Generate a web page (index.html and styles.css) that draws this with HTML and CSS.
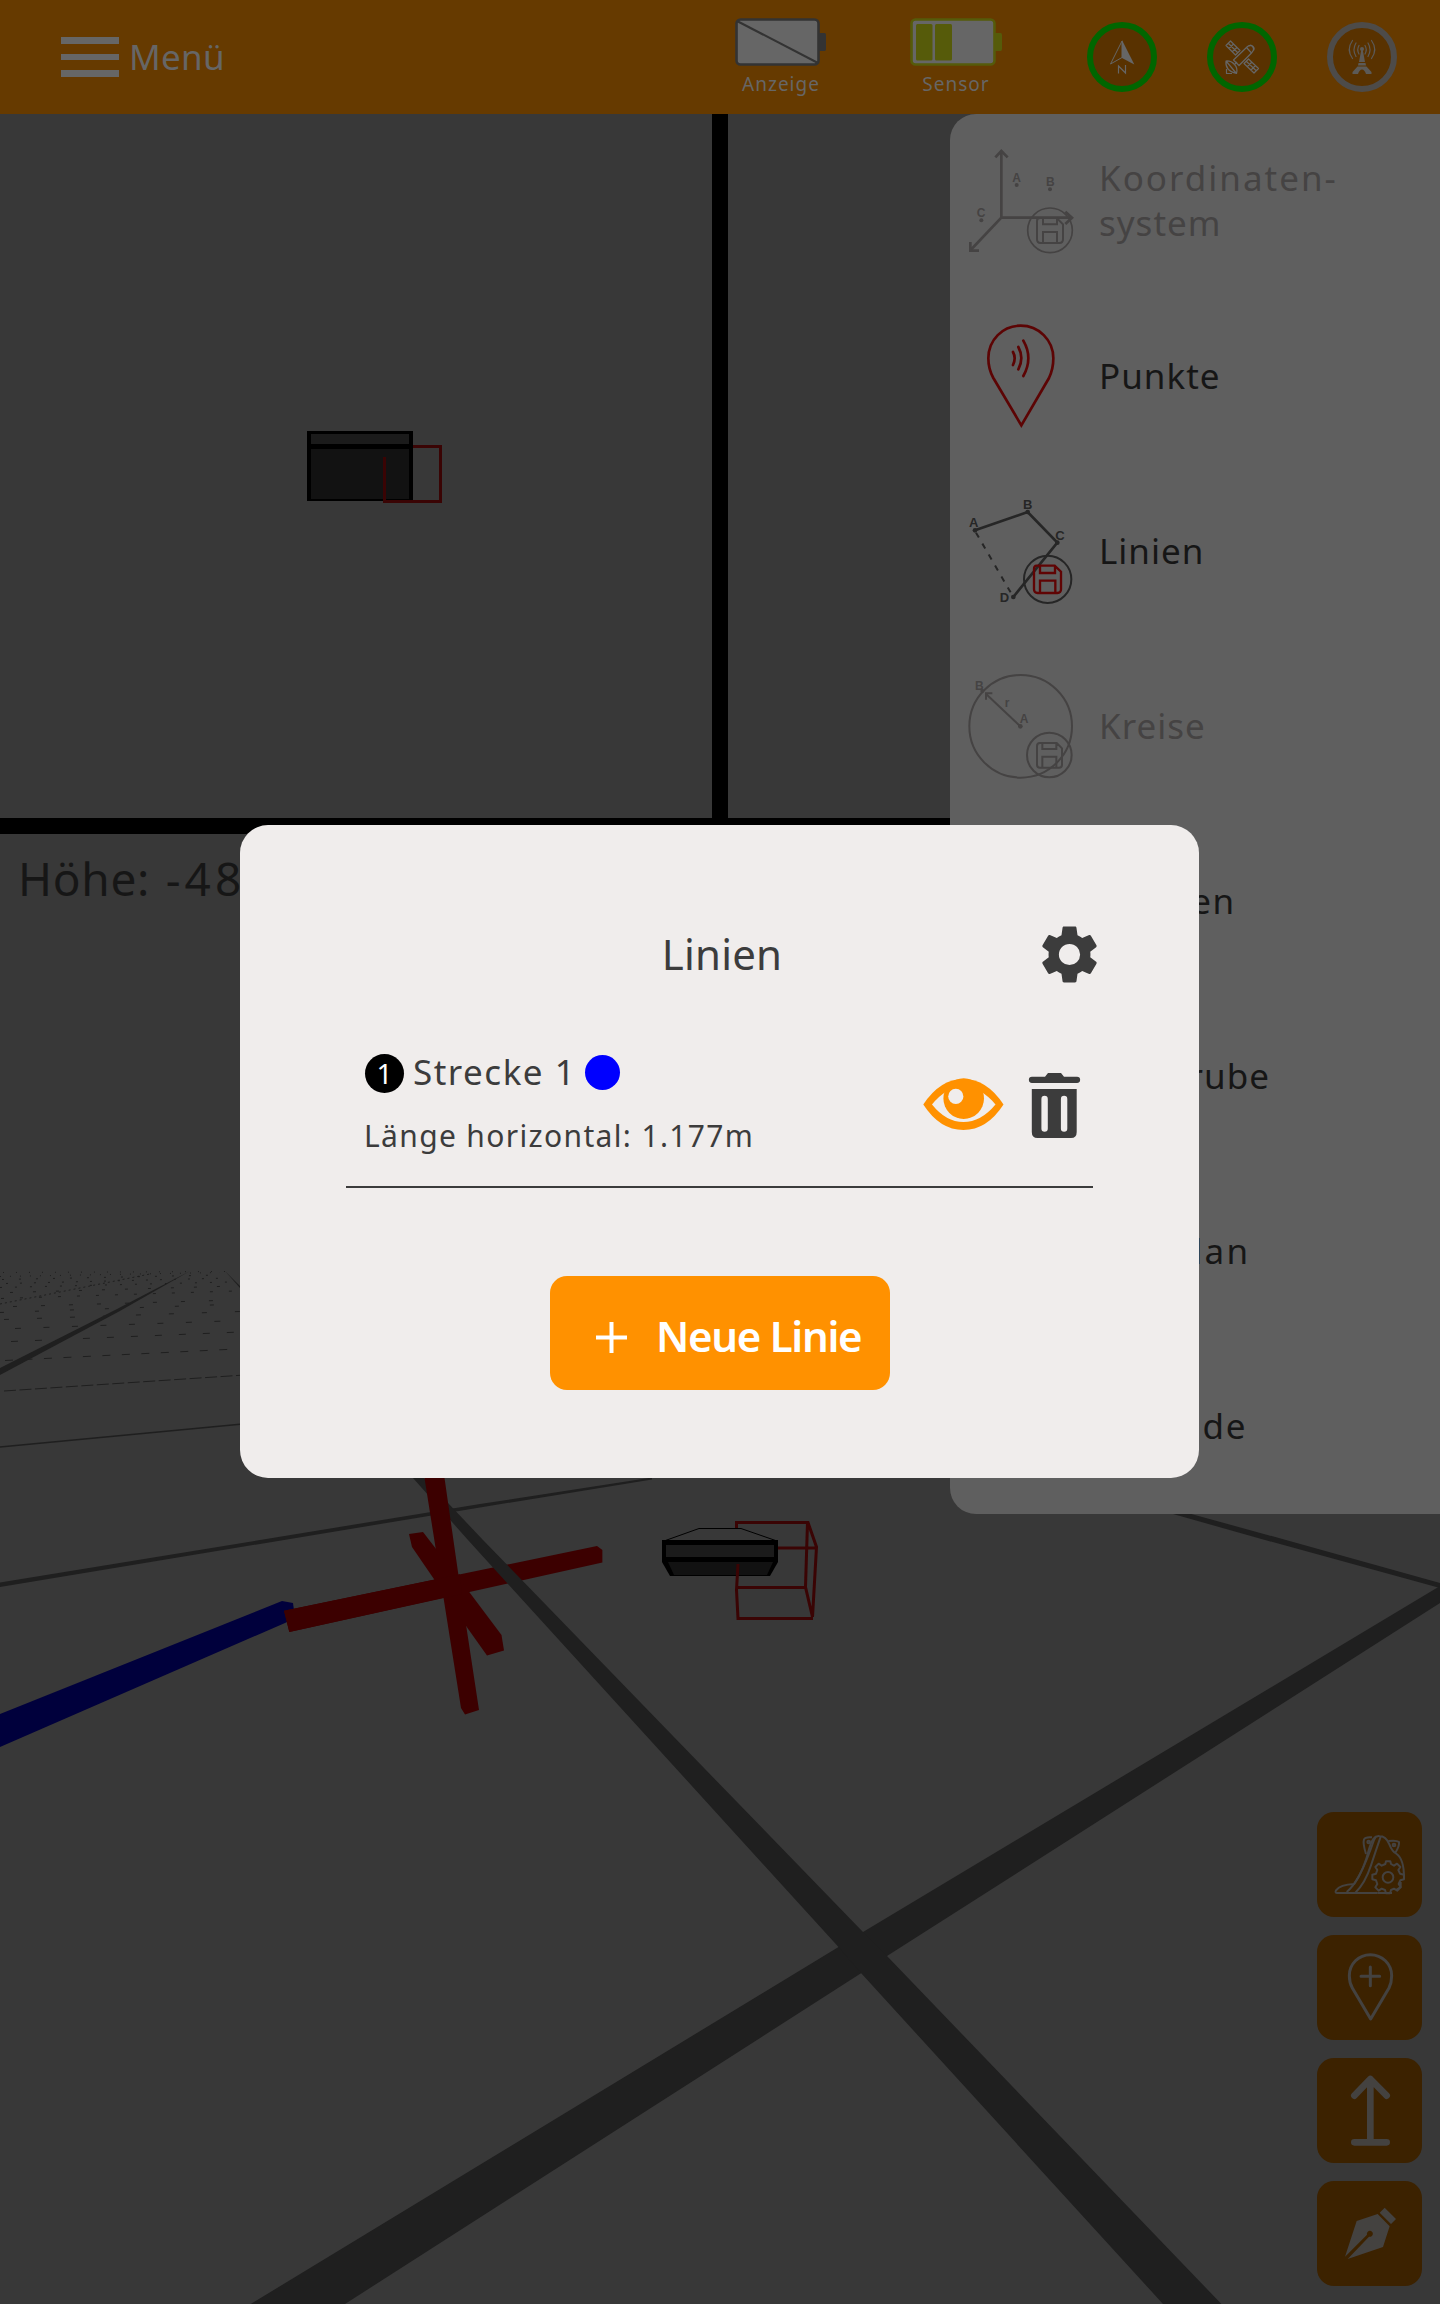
FILE: index.html
```html
<!DOCTYPE html>
<html lang="de">
<head>
<meta charset="utf-8">
<title>Linien</title>
<link rel="stylesheet" href="styles.css">
</head>
<body>
<div class="app">
  <svg class="scene" viewBox="0 0 1440 2304" width="1440" height="2304">
    <!-- viewport dividers -->
    <path fill="#000" d="M712 114h16v704h712v16H0v-16h712z"/>
    <!-- ground grid -->
    <g fill="#1f1f1f">
      <path d="M0 1368L117 1309L190 1271L119 1311.500L0 1375z"/>
      <path d="M225 1271L240 1286L240 1288z"/>
      <path d="M0 1582.500L480 1504L652 1477.500L652 1479.500L480 1507.500L0 1587z"/>
      <path d="M1184 1512L1286 1540L1440 1583L1440 1588L1265 1540L1166 1512z"/>
      <path d="M1440 1586L863 1932L838.500 1947L250.700 2304H345L861.400 1973L887 1956L1440 1603z"/>
    </g>
    <g fill="none" stroke="#1f1f1f" stroke-width="1">
      <path stroke-width="1.400" d="M0 1447L240 1424.300"/>
      <path stroke-dasharray="12 3.500" d="M4 1391L240 1375.300"/>
      <path stroke-dasharray="8 11.500" d="M5 1360.500L232 1349.200"/>
      <path stroke-dasharray="7 17" d="M11 1341.500L240 1332"/>
      <path stroke-dasharray="6 22.500" d="M15 1328.500L240 1320.500"/>
      <path stroke-dasharray="5 28" d="M4 1319.500L240 1311.500"/>
      <path stroke-dasharray="4 31" d="M0 1312.500L240 1304"/>
      <path stroke-dasharray="4 24" d="M13 1306.500L235 1300"/>
      <path stroke-dasharray="2 3" d="M0 1304L150 1274"/>
      <path stroke-dasharray="3 16" d="M1 1298.500L235 1291"/>
      <path stroke-dasharray="3 20" d="M10 1292.500L235 1286"/>
      <path stroke-dasharray="2 13" d="M0 1287.500L230 1282"/>
      <path stroke-dasharray="2 12" d="M6 1283.500L230 1278"/>
      <path stroke-dasharray="2 15" d="M2 1279.500L220 1275"/>
      <path stroke-dasharray="1 9" d="M0 1276.500L220 1272.500"/>
      <path stroke-dasharray="1 12" d="M3 1272.500L225 1271.500"/>
    </g>
    <path fill="#00003c" d="M0 1714L282 1601L293 1603L295 1618L285 1623L0 1747z"/>
    <path fill="#3c0000" d="M284 1610.700L597 1546L602.400 1550V1562.500L289.300 1632z"/>
    <path fill="#1f1f1f" d="M413 1478L468 1540L838.500 1947L861 1973L1163 2304H1221.400L887 1956L863 1932L483 1540L448 1503L424 1478z"/>
    <path fill="#3c0000" d="M424.500 1478H444.500L458 1572L479 1710L465 1714.500L461 1708z"/>
    <path fill="#3c0000" d="M409 1534L423 1532L470 1593L501.500 1635L504 1650.500L487 1655.500L468 1628.700L412 1547z"/>
    <path fill="#3c0000" d="M284 1610.700L460 1574.300L462 1594L289.300 1632z"/>
    <!-- bucket, top view -->
    <path fill="#000" d="M307 431h106v70H307z"/>
    <path fill="#1b1b1b" d="M311 434h98v10h-98z"/>
    <path fill="#121212" d="M311 449h98v50h-98z"/>
    <path fill="none" stroke="#3a0404" stroke-width="3" d="M413 446.500H440.500V501.500H384.500V457"/>
    <!-- bucket, perspective view -->
    <g fill="none" stroke="#3a0404" stroke-width="3">
      <path d="M736.500 1529V1522.500H808L816.500 1547L812.500 1617L805.500 1587L807.500 1522.500M778 1548H817M738 1587.500H805.500"/>
    </g>
    <path fill="none" stroke="#000" d="M664 1541L699 1528.500H741L777 1541"/>
    <path fill="#000" d="M662 1540h116v22l-8 14H670l-8-14z"/>
    <path fill="#1b1b1b" d="M666 1545h108v12H666z"/>
    <path fill="#121212" d="M668 1562h105l-6 13h-93z"/>
    <path fill="none" stroke="#3a0404" stroke-width="3" d="M738 1564L736.500 1590L738 1618.500H813"/>
  </svg>
  <p class="height-label">Höhe: <span>-48</span></p>

  <header class="topbar">
    <div class="burger"><span></span><span></span><span></span></div>
    <span class="menu-title">Menü</span>
    <div class="status">
      <div class="battery">
        <svg viewBox="0 0 92 48" width="92" height="48">
          <rect x="1.500" y="1.500" width="82" height="45" rx="4" fill="#666" stroke="#333" stroke-width="2.600"/>
          <path d="M84 15h5.500q1.500 0 1.500 2v14q0 2-1.500 2H84z" fill="#333"/>
          <path d="M2 3L83 45" stroke="#333" stroke-width="2"/>
        </svg>
        <span>Anzeige</span>
      </div>
      <div class="battery">
        <svg viewBox="0 0 92 48" width="92" height="48">
          <rect x="1.500" y="1.500" width="83" height="45" rx="4" fill="#666" stroke="#565b0a" stroke-width="2.600"/>
          <path d="M85 15h5.500q1.500 0 1.500 2v14q0 2-1.500 2H85z" fill="#565b0a"/>
          <rect x="6" y="6" width="16.500" height="36.500" rx="1.500" fill="#565b0a"/>
          <rect x="25" y="6" width="17" height="36.500" rx="1.500" fill="#565b0a"/>
        </svg>
        <span>Sensor</span>
      </div>
      <div class="rings">
        <svg viewBox="1087 22 70 70" width="70" height="70">
          <circle cx="1122" cy="57" r="32" fill="#593200" stroke="#060" stroke-width="6"/>
          <path d="M1122 41L1110.500 64L1122 57.500z" fill="none" stroke="#666" stroke-width="1"/>
          <path d="M1122 40L1134.300 64.500L1122 58z" fill="#666"/>
          <path d="M1118.500 73.500V66L1125.500 73V65" fill="none" stroke="#666" stroke-width="1.200"/>
        </svg>
        <svg viewBox="1207 22 70 70" width="70" height="70">
          <circle cx="1242" cy="57" r="32" fill="#593200" stroke="#060" stroke-width="6"/>
          <g fill="none" stroke="#666" stroke-width="1.200" stroke-linejoin="round">
            <path d="M1233.500 60L1246.500 47.500L1251.500 53L1239 65.500z"/>
            <path d="M1246.500 47.500Q1250 44 1252.500 46.500T1251.500 53M1249 46Q1251 44.500 1253 46.500T1253.500 50.500"/>
            <path d="M1226 45.500L1230.500 41L1240 50.500L1235.500 55zM1229 48.500L1233.500 44M1232.500 51.500L1237 47.500M1228.500 43.500L1238 53"/>
            <path d="M1244 63.500L1248.500 59L1258.500 68.500L1254 73zM1247.500 66.500L1252 62M1251 70L1255.500 65.500M1246.500 61.500L1256.500 71"/>
            <path d="M1226 61Q1225 71 1236.500 73.500Q1238 68 1234.500 64.500Q1231 60.500 1226 61L1236.500 73.500M1226.500 69V73.500H1232M1235 64L1237 62"/>
          </g>
        </svg>
        <svg viewBox="1327 22 70 70" width="70" height="70">
          <circle cx="1362" cy="57" r="32" fill="#593200" stroke="#4d4b49" stroke-width="6"/>
          <g fill="none" stroke="#5c5a57" stroke-width="1.200" stroke-linecap="round">
            <path d="M1359 45.500Q1356.500 49.500 1359 54M1365 45.500Q1367.500 49.500 1365 54M1356 43Q1352 49.500 1356 56.500M1368 43Q1372 49.500 1368 56.500M1352.500 40.500Q1346 49.500 1352.500 58.500M1371.500 40.500Q1378 49.500 1371.500 58.500"/>
          </g>
          <g fill="#5c5a57">
            <circle cx="1362" cy="49" r="2"/>
            <path d="M1361.200 50H1362.800L1365 62H1359zM1358.500 63H1365.500L1366 65.500H1358zM1357.500 66.500H1366.500L1371.500 72V74H1366Q1364.500 69.500 1362 69.500T1358 74H1352.500V72z"/>
          </g>
        </svg>
      </div>
    </div>
  </header>

  <nav class="drawer">
    <div class="entry off">
      <svg viewBox="84 117 315 315" width="105" height="105">
        <g fill="none" stroke="#454343" stroke-width="8">
          <path d="M184 122V323H394M184 323L92 420"/>
          <path d="M166 142L184 123L203 142M376 305L396 323L376 342M91 396V422H117"/>
          <circle cx="330" cy="361" r="67" stroke-width="5"/>
          <path stroke-width="6" d="M300 324H350L369 343V388Q369 399 358 399H302Q291 399 291 388V333Q291 324 300 324zM309 324V343H351V324M309 398V366H351V398"/>
        </g>
        <g fill="#454343" class="glyph"><text x="217" y="217">A</text><text x="318" y="228">B</text><text x="110" y="321">C</text>
        <circle cx="230" cy="225" r="6"/><circle cx="330" cy="238" r="6"/><circle cx="124" cy="331" r="6"/></g>
      </svg>
      <span><span class="wide">Koordinaten-</span><br>system</span>
    </div>
    <div class="entry">
      <svg viewBox="84 642 315 315" width="105" height="105">
        <g fill="none" stroke="#5c0404" stroke-width="8" stroke-linecap="round">
          <path d="M244 946L160 804Q145 777 145 745C145 690 188 647 242 647S340 690 340 745Q340 777 327 804z"/>
          <path d="M219 726Q229 744 219 765M235 711Q253 744 235 778M250 692Q280 744 250 798"/>
        </g>
      </svg>
      <span>Punkte</span>
    </div>
    <div class="entry">
      <svg viewBox="84 57 315 315" width="105" height="105">
        <g fill="none" stroke="#262626">
          <path stroke-width="8" d="M105 151L263 96L352 188L220 351"/>
          <path stroke-width="6" stroke-dasharray="17 21" d="M108 158L217 346"/>
          <circle cx="323" cy="298" r="71" stroke-width="6"/>
        </g>
        <path fill="none" stroke="#600404" stroke-width="7" d="M290 257H344L363 275V328Q363 339 352 339H293Q282 339 282 328V267Q282 257 290 257zM300 257V279H345V257M300 339V302H346V339"/>
        <g fill="#262626" class="glyph big"><circle cx="105" cy="151" r="7"/><circle cx="263" cy="96" r="7"/><circle cx="352" cy="188" r="7"/><circle cx="220" cy="351" r="7"/>
        <text x="87" y="141">A</text><text x="249" y="87">B</text><text x="346" y="181">C</text><text x="179" y="367">D</text></g>
      </svg>
      <span>Linien</span>
    </div>
    <div class="entry off">
      <svg viewBox="84 582 315 315" width="105" height="105">
        <g fill="none" stroke="#454343" stroke-width="6">
          <circle cx="242" cy="739" r="154"/>
          <circle cx="328" cy="825" r="67"/>
          <path d="M241 739L139 643M138 659V640H157"/>
          <path d="M300 789H350L366 805V854Q366 863 357 863H300Q291 863 291 854V798Q291 789 300 789zM307 789V807H349V789M307 863V830H349V863"/>
        </g>
        <g fill="#454343" class="glyph"><circle cx="241" cy="739" r="7"/><circle cx="127" cy="633" r="6"/>
        <text x="105" y="630">B</text><text x="239" y="729">A</text><text x="194" y="682">r</text></g>
      </svg>
      <span>Kreise</span>
    </div>
    <div class="entry covered"><span class="areas">Flächen</span></div>
    <div class="entry covered"><span>Baugrube</span></div>
    <div class="entry covered"><span class="plan">Bauplan</span></div>
    <div class="entry covered"><span class="terrain">Gelände</span></div>
  </nav>

  <div class="tools">
    <div class="tool">
      <svg viewBox="81 66 315 315" width="105" height="105">
        <g fill="none" stroke="#444240" stroke-width="6" stroke-linejoin="round">
          <path d="M262 309H142Q134 309 138 301Q150 284 193 282Q222 240 238 174Q248 136 268 138Q288 138 298 163Q306 184 320 192Q342 208 342 262"/>
          <path d="M170 306Q190 290 210 252T252 150L258 139M196 308Q225 280 243 226T272 140"/>
          <path d="M228 192Q218 160 222 148Q226 140 246 142M295 153Q320 150 327 156Q329 168 315 190"/>
          <circle cx="236" cy="156" r="4"/><circle cx="312" cy="165" r="4"/>
          <circle cx="294" cy="262" r="16"/>
          <path stroke-width="6" d="M286 222L288 214H301L303 222L312 227L321 221L331 231L325 240L330 251L342 254V268L331 271L326 282L332 292L322 302L312 296L303 300L300 310H288L285 300L275 296L266 302L256 292L262 282L258 271L247 268V254L258 251L262 240L256 231L266 221L275 227z"/>
          <path d="M262 309H306M318 300L332 291V276" stroke-width="6"/>
        </g>
      </svg>
    </div>
    <div class="tool">
      <svg viewBox="81 435 315 315" width="105" height="105">
        <g fill="none" stroke="#444240" stroke-width="9" stroke-linecap="round" stroke-linejoin="round">
          <path d="M242 687L187 594Q178 578 178 557C178 522 206 494 241 494S305 522 305 557Q305 578 297 594z"/>
          <path d="M241 531V587M213 559H269"/>
        </g>
      </svg>
    </div>
    <div class="tool">
      <svg viewBox="81 804 315 315" width="105" height="105">
        <path fill="none" stroke="#444240" stroke-width="20" stroke-linecap="round" stroke-linejoin="round" d="M241 1057V868M193 917L241 867L290 917M193 1057H290"/>
      </svg>
    </div>
    <div class="tool">
      <svg viewBox="81 1173 315 315" width="105" height="105">
        <path fill="#444240" d="M284 1253L318 1287L303 1302L269 1268zM263 1272L200 1293L165 1400L231 1334A9 9 0 1 1 237 1340L173 1407L279 1371L299 1309z"/>
      </svg>
    </div>
  </div>

  <section class="dialog">
    <div class="dialog-head">
      <h1>Linien</h1>
      <svg class="gear" viewBox="0 0 24 24" width="67" height="67"><path fill="#3c3c3c" d="M19.430 12.980c.04-.32.07-.64.07-.98s-.03-.66-.07-.98l2.110-1.650c.19-.15.24-.42.12-.64l-2-3.460c-.12-.22-.39-.3-.61-.22l-2.490 1c-.52-.4-1.080-.73-1.690-.98l-.38-2.650C14.460 2.180 14.250 2 14 2h-4c-.25 0-.46.18-.49.42l-.38 2.650c-.61.25-1.170.59-1.690.98l-2.490-1c-.23-.09-.49 0-.61.22l-2 3.460c-.13.22-.07.49.12.64l2.110 1.650c-.04.32-.07.65-.07.98s.03.66.07.98l-2.110 1.650c-.19.15-.24.42-.12.64l2 3.460c.12.22.39.3.61.22l2.490-1c.52.4 1.080.73 1.690.98l.38 2.650c.03.24.24.42.49.42h4c.25 0 .46-.18.49-.42l.38-2.650c.61-.25 1.170-.59 1.690-.98l2.490 1c.23.09.49 0 .61-.22l2-3.460c.12-.22.07-.49-.12-.64l-2.110-1.650zM12 15.800a3.800 3.800 0 1 1 0-7.600a3.800 3.800 0 0 1 0 7.600z"/></svg>
    </div>
    <div class="line-row">
      <div class="line-info">
        <div class="line-name"><span class="num">1</span><span class="name">Strecke 1</span><span class="dot"></span></div>
        <div class="line-length">Länge horizontal: 1.177m</div>
      </div>
      <svg class="eye" viewBox="923 1078 81 53" width="81" height="53">
        <path fill="#ff9100" d="M923.300 1104.500Q940 1079 963.400 1079T1003.500 1104.500Q987 1130 963.400 1130T923.300 1104.500z"/>
        <path fill="#f0edec" d="M932 1104.500Q945 1088 963.400 1086Q982 1088 995.500 1104.500Q981 1122 963.400 1122Q946 1122 932 1104.500z"/>
        <circle cx="963.700" cy="1098.600" r="20.300" fill="#ff9100"/>
        <circle cx="955.800" cy="1096.400" r="7.600" fill="#f0edec"/>
      </svg>
      <svg class="trash" viewBox="1029 1073 51 65" width="51" height="65">
        <path fill="#3c3c3c" fill-rule="evenodd" d="M1045 1076.700L1048 1073H1061L1064 1076.700H1077A3.100 3.100 0 0 1 1077 1083H1032A3.100 3.100 0 0 1 1032 1076.700zM1031.800 1089H1076.700V1132Q1076.700 1138 1071 1138H1037.500Q1031.800 1138 1031.800 1132zM1041.400 1099V1128.500A3.200 3.200 0 0 0 1047.800 1128.500V1099A3.200 3.200 0 0 0 1041.400 1099zM1060.900 1099V1128.500A3.200 3.200 0 0 0 1067.300 1128.500V1099A3.200 3.200 0 0 0 1060.900 1099z"/>
      </svg>
    </div>
    <button class="new-line">
      <svg viewBox="0 0 31 31" width="31" height="31"><path stroke="#fff" stroke-width="4" d="M15.500 0V31M0 15.500H31"/></svg>
      <span>Neue Linie</span>
    </button>
  </section>
</div>
</body>
</html>
```
FILE: styles.css
```css
* { box-sizing: border-box; }

body {
  margin: 0;
  background: #383838;
  font-family: "Noto Sans", "Open Sans", sans-serif;
  color: #161616;
}

svg { display: block; flex: none; overflow: visible; }

.app {
  position: relative;
  width: 1440px;
  height: 2304px;
  overflow: hidden;
}

.scene { position: absolute; left: 0; top: 0; }

.height-label {
  position: absolute;
  left: 18px;
  top: 848px;
  margin: 0;
  font-size: 46px;
  line-height: 60px;
  letter-spacing: 0.7px;
  white-space: nowrap;
}

.height-label span { margin-left: 3px; letter-spacing: 4px; }

/* top bar */
.topbar {
  position: relative;
  display: flex;
  height: 114px;
  padding: 0 43px 0 61px;
  background: #663a00;
  color: #666;
}

.burger {
  display: flex;
  flex-direction: column;
  gap: 10px;
  width: 58px;
  padding-top: 37px;
}

.burger span { height: 6.5px; background: #666; }

.menu-title {
  margin-left: 10px;
  font-size: 35px;
  line-height: 113px;
  letter-spacing: 0.3px;
}

.status { display: flex; margin-left: auto; }

.battery {
  display: flex;
  flex-direction: column;
  align-items: center;
  width: 92px;
  margin-right: 83px;
  padding-top: 18px;
  font-size: 19px;
  line-height: 26px;
  letter-spacing: 1px;
}

.battery span { margin-top: 5px; }

.rings { display: flex; gap: 50px; padding-top: 22px; margin-left: 2px; }

/* side drawer */
.drawer {
  position: relative;
  width: 490px;
  margin-left: auto;
  border-radius: 26px 0 0 26px;
  background: #5f5f5f;
  font-size: 35px;
  line-height: 45px;
  letter-spacing: 1px;
}

.entry {
  display: flex;
  align-items: center;
  gap: 26px;
  height: 175px;
  padding-left: 18px;
}

.entry > span { padding-bottom: 3px; }
.entry.off { color: #454343; }
.entry.covered { padding-left: 149px; }

.wide { letter-spacing: 2px; }
.areas { letter-spacing: 1.4px; }
.plan { letter-spacing: 2.2px; }
.terrain { letter-spacing: 1.6px; }

.glyph { font: bold 36px "Liberation Sans", sans-serif; letter-spacing: 0; }
.glyph.big { font-size: 39px; }

/* floating tools */
.tools {
  position: absolute;
  right: 18px;
  bottom: 18px;
  display: flex;
  flex-direction: column;
  gap: 18px;
}

.tool { width: 105px; height: 105px; border-radius: 17px; background: #3c2200; }

/* dialog */
.dialog {
  position: absolute;
  left: 240px;
  top: 825px;
  width: 959px;
  height: 653px;
  padding: 96px 106px 0;
  border-radius: 28px;
  background: #f0edec;
  color: #3c3c3c;
}

.dialog-head {
  display: grid;
  grid-template-columns: 67px 1fr 67px;
  align-items: center;
  height: 67px;
  margin-right: -10px;
}

.dialog-head h1 {
  grid-column: 2;
  margin: 0 0 2px -5px;
  font-size: 42px;
  font-weight: 400;
  line-height: 60px;
  letter-spacing: 0.2px;
  text-align: center;
}

.line-row {
  display: flex;
  height: 200px;
  padding: 66px 13px 0 19px;
  border-bottom: 2px solid #3c3c3c;
}

.line-info { flex: 1; }

.line-name { display: flex; align-items: center; height: 39px; }

.num {
  width: 39px;
  height: 39px;
  border-radius: 50%;
  background: #000;
  color: #fff;
  font-size: 28px;
  line-height: 39px;
  text-align: center;
}

.name {
  width: 165px;
  margin-left: 9px;
  padding-bottom: 4px;
  font-size: 35px;
  line-height: 39px;
  letter-spacing: 1.5px;
  white-space: nowrap;
}

.dot { width: 35px; height: 35px; margin: 0 0 2px 7px; border-radius: 50%; background: #00f; }

.line-length {
  margin: 23px 0 0 -1px;
  font-size: 30px;
  line-height: 40px;
  letter-spacing: 1.35px;
  white-space: nowrap;
}

.eye { margin: 24px 25px 0 0; }
.trash { margin-top: 19px; }

.new-line {
  display: flex;
  align-items: center;
  width: 340px;
  height: 114px;
  margin: 88px 0 0 204px;
  padding: 8px 0 0 46px;
  border: 0;
  border-radius: 17px;
  background: #ff9100;
  color: #fff;
  font-family: inherit;
  font-size: 42px;
  font-weight: 600;
  line-height: 60px;
  letter-spacing: -1.3px;
  white-space: nowrap;
}

.new-line span { margin: -3px 0 0 29px; }
```
